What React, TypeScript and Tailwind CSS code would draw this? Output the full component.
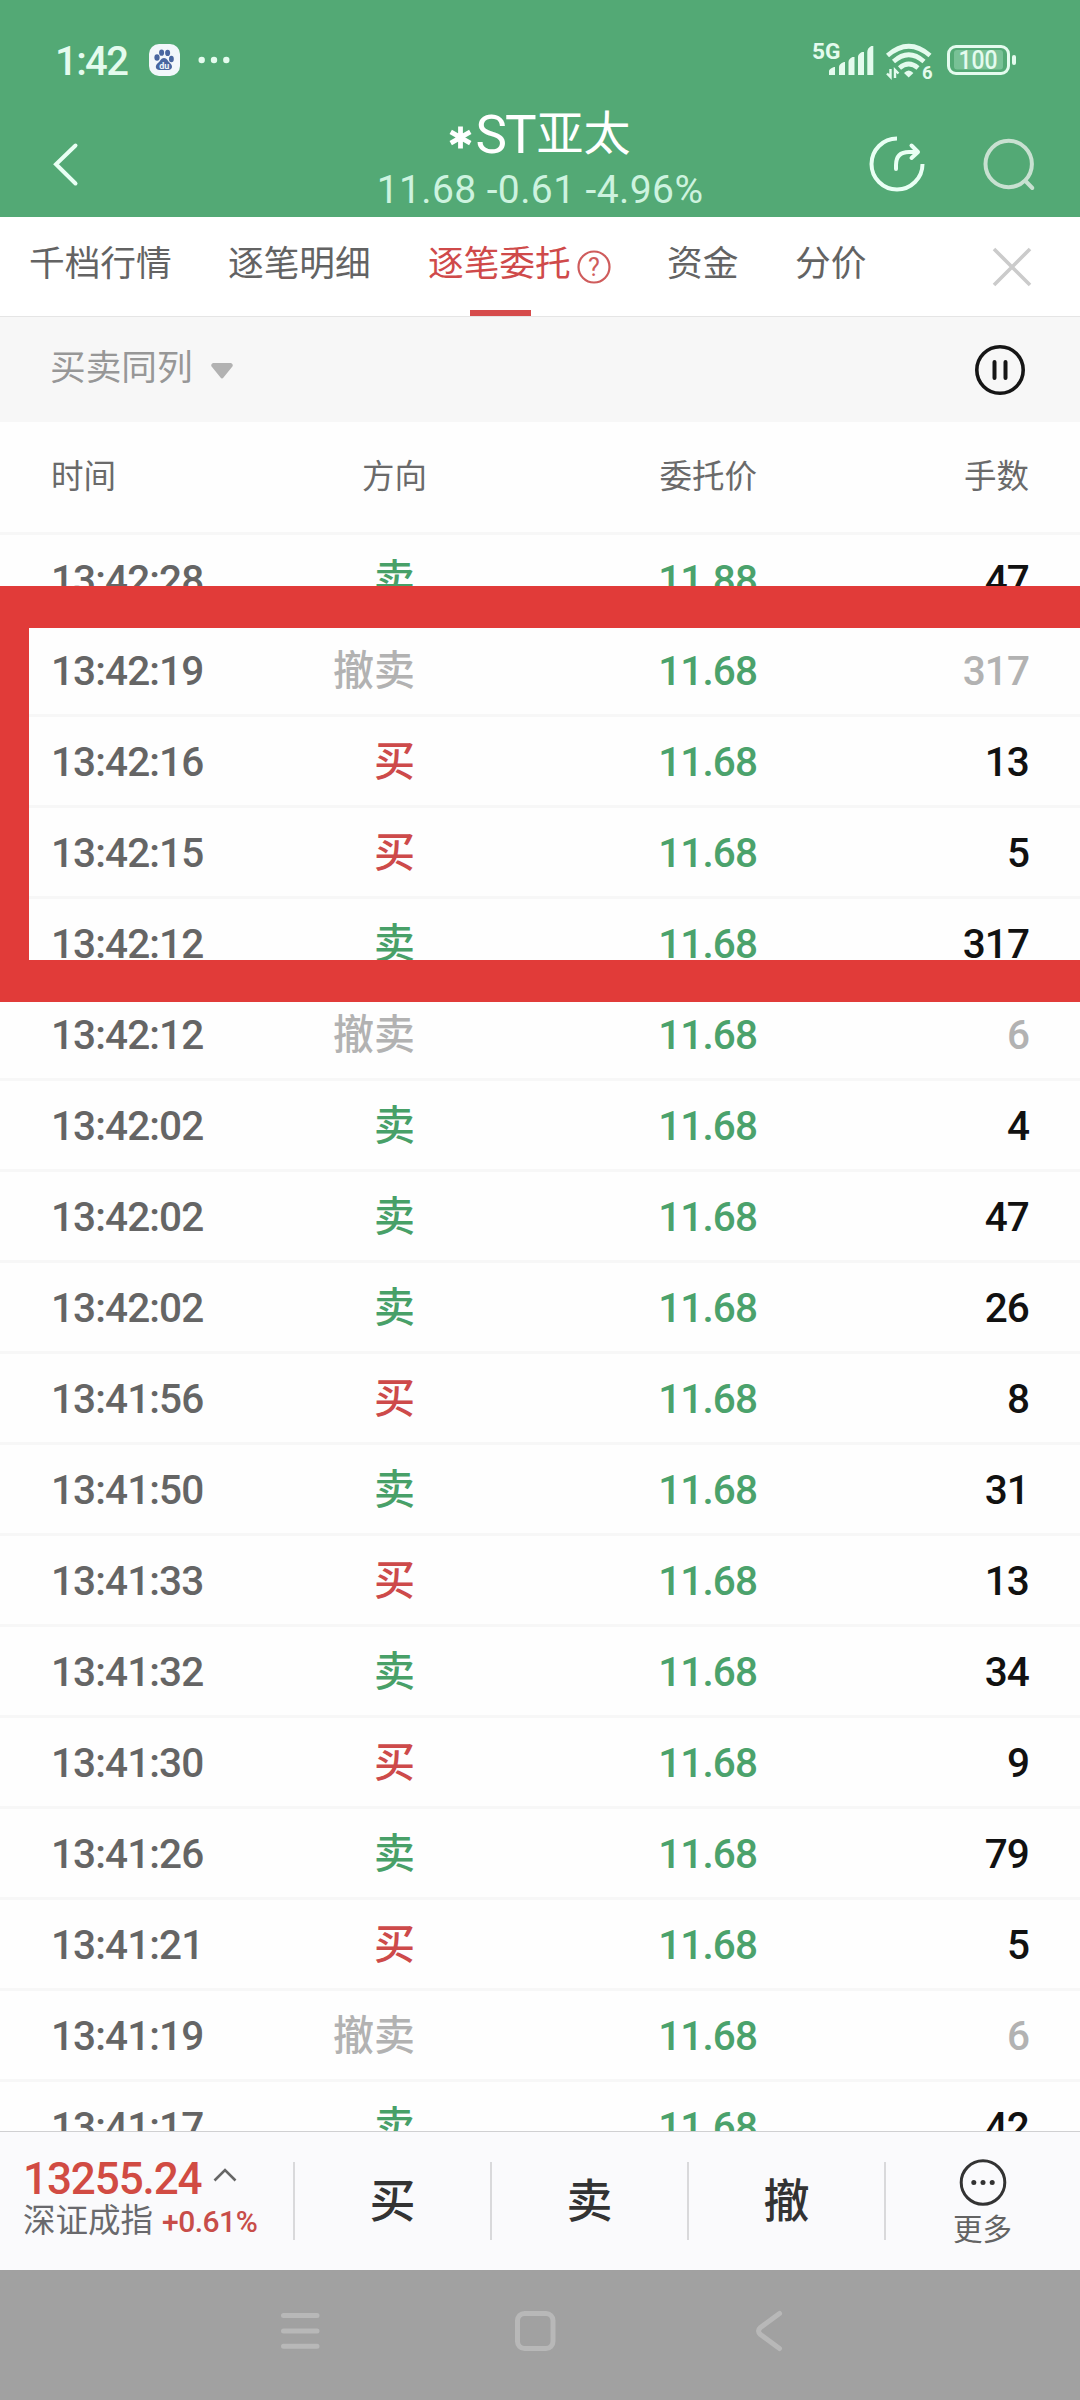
type Side = "buy" | "sell" | "cancel";

type Order = {
  time: string;
  side: Side;
  price: string;
  qty: number;
};

const orders: Order[] = [
  { time: "13:42:28", side: "sell", price: "11.88", qty: 47 },
  { time: "13:42:19", side: "cancel", price: "11.68", qty: 317 },
  { time: "13:42:16", side: "buy", price: "11.68", qty: 13 },
  { time: "13:42:15", side: "buy", price: "11.68", qty: 5 },
  { time: "13:42:12", side: "sell", price: "11.68", qty: 317 },
  { time: "13:42:12", side: "cancel", price: "11.68", qty: 6 },
  { time: "13:42:02", side: "sell", price: "11.68", qty: 4 },
  { time: "13:42:02", side: "sell", price: "11.68", qty: 47 },
  { time: "13:42:02", side: "sell", price: "11.68", qty: 26 },
  { time: "13:41:56", side: "buy", price: "11.68", qty: 8 },
  { time: "13:41:50", side: "sell", price: "11.68", qty: 31 },
  { time: "13:41:33", side: "buy", price: "11.68", qty: 13 },
  { time: "13:41:32", side: "sell", price: "11.68", qty: 34 },
  { time: "13:41:30", side: "buy", price: "11.68", qty: 9 },
  { time: "13:41:26", side: "sell", price: "11.68", qty: 79 },
  { time: "13:41:21", side: "buy", price: "11.68", qty: 5 },
  { time: "13:41:19", side: "cancel", price: "11.68", qty: 6 },
  { time: "13:41:17", side: "sell", price: "11.68", qty: 42 },
];

const sideLabel: Record<Side, string> = { buy: "买", sell: "卖", cancel: "撤卖" };

const sideColor: Record<Side, string> = {
  buy: "text-[#cd4a4a]",
  sell: "text-[#48a068]",
  cancel: "text-[#b2b2b2]",
};

function StatusBar() {
  return (
    <div className="flex h-[110px] items-start text-[#e4fbee]">
      <div className="mt-[41px] ml-[55px] w-[94px] text-[40px] leading-[41px] font-medium tracking-[-1.6px]">1:42</div>

      {/* NOTIFICATIONS */}
      <svg className="mt-[40px]" width="90" height="40" viewBox="149 40 90 40">
        <rect x="149" y="44" width="31" height="32" rx="10" fill="#f2f7fb" />
        <g fill="#4866a0">
          <ellipse cx="157" cy="57.5" rx="2.6" ry="3.3" />
          <ellipse cx="161.6" cy="52.7" rx="2.5" ry="3.1" />
          <ellipse cx="167.6" cy="52.9" rx="2.5" ry="3.1" />
          <ellipse cx="171.4" cy="59" rx="2.4" ry="3.2" />
          <path d="M164 58c3 0 3.6 3 6 5 3.5 3 2 7-1.5 7h-9c-4 0-5-4.5-1.5-7 2.5-2 3-5 6-5z" />
        </g>
        <text x="164.2" y="68.8" textAnchor="middle" fontSize="9" fontWeight="700" fill="#f2f7fb">du</text>
        <g fill="currentColor">
          <circle cx="201.7" cy="60" r="3.2" />
          <circle cx="214" cy="60" r="3.2" />
          <circle cx="226.3" cy="60" r="3.2" />
        </g>
      </svg>

      {/* SIGNAL, WIFI, BATTERY */}
      <svg className="mt-[38px] ml-[571px]" width="210" height="46" viewBox="810 38 210 46" fill="currentColor">
        <text x="812" y="58.5" fontSize="22" fontWeight="700" textLength="28.5" lengthAdjust="spacingAndGlyphs">5G</text>
        <path d="M829 75v-4q0-2 5-4h1v8zM839 75v-8q0-3 5-5h1v13zM848.5 75v-13q0-3 4-5h2v18zM858 75v-18q0-3 4-5h2v23zM867.3 75v-23q0-4 4-6h2v29z" />
        <g fill="none" stroke="currentColor" strokeWidth="4.6">
          <path d="M887.5 55.5Q908.7 37 930 55.5" />
          <path d="M893.5 61.5Q908.7 48 924 61.5" />
          <path d="M899.5 68Q908.7 60 918 68" />
        </g>
        <path d="M904 73q4.7-5 9.4 0l-4.7 4.5z" />
        <path d="M890.5 69v8l-3.5-3.5M895 78v-8l3.5 3.5" fill="none" stroke="currentColor" strokeWidth="2.4" />
        <text x="922" y="78.8" fontSize="18.5" fontWeight="700">6</text>
        <rect x="948.5" y="46.5" width="60" height="27" rx="7.5" fill="none" stroke="currentColor" strokeWidth="3" />
        <rect x="954" y="50" width="49" height="19.5" rx="3" fill="#78c196" />
        <text x="978" y="69" textAnchor="middle" fontSize="25" fontWeight="500" textLength="39" lengthAdjust="spacingAndGlyphs">100</text>
        <rect x="1012" y="55" width="4" height="10" rx="2" />
      </svg>
    </div>
  );
}

function TitleBar() {
  return (
    <div className="flex h-[107px] items-start">
      <svg className="mt-[29px] ml-[50px]" width="32" height="50" viewBox="50 139 32 50" fill="none" stroke="#e9fff4" strokeWidth="4" strokeLinecap="round">
        <path d="M75.5 145.5L56 164.3l19.5 19.2" />
      </svg>

      <div className="ml-[288px] flex w-[340px] flex-col items-center">
        <div className="flex h-[50px] items-center whitespace-nowrap text-white">
          <svg className="mt-[4px] mr-[3px]" width="23" height="25" viewBox="0 0 24 26" stroke="currentColor" strokeWidth="5">
            <path d="M12 1.5v23M1.8 7.2l20.4 11.6M1.8 18.8L22.2 7.2" />
          </svg>
          <span className="text-[53px] leading-[50px] tracking-[-2px]">ST</span>
          <span className="-mt-[2px] ml-[2px] text-[47px] leading-[50px]">亚太</span>
        </div>
        <div className="mt-[10px] text-[39px] leading-[40px] tracking-[0.4px] whitespace-nowrap text-[#cdf3df]">
          11.68 -0.61 -4.96%
        </div>
      </div>

      <svg className="mt-[24px] ml-[158px]" width="172" height="60" viewBox="868 134 172 60" fill="none" strokeWidth="4" strokeLinecap="round" strokeLinejoin="round">
        <g stroke="#e9fff4">
          <path d="M897 138.5a25.5 25.5 0 1 0 25.5 25.5" strokeLinecap="butt" />
          <path d="M896 169v-4q0-13 13-13h8M911.5 145.5l6.5 6.5-6.5 6" />
        </g>
        <g stroke="#c8e1d1">
          <circle cx="1008.7" cy="164" r="23.2" />
          <path d="M1026 181.5l6.3 6.5" />
        </g>
      </svg>
    </div>
  );
}

function Tabs() {
  return (
    <div className="flex h-[100px] items-start border-b border-[#e5e5e5] bg-white pl-[29px] text-[35.7px] leading-[95px] whitespace-nowrap text-[#636363]">
      <div className="w-[199px]">千档行情</div>
      <div className="w-[200px]">逐笔明细</div>
      <div className="relative flex w-[239px] items-center text-[#cf4a4a]">
        逐笔委托
        <svg className="mt-[4px] ml-[5px]" width="36" height="36" viewBox="0 0 36 36">
          <circle cx="18" cy="18" r="15.5" fill="none" stroke="#cf5c5c" strokeWidth="2.2" />
          <text x="18" y="27" textAnchor="middle" fontSize="25" fill="#cf5c5c">?</text>
        </svg>
        <span className="absolute top-[93px] left-[42px] h-[6px] w-[61px] bg-[#d64c4c]" />
      </div>
      <div className="w-[128px]">资金</div>
      <div className="w-[197px]">分价</div>
      <svg className="mt-[30px]" width="40" height="40" viewBox="0 0 40 40" stroke="#cbcbcb" strokeWidth="3.6">
        <path d="M2 2l36 36M38 2L2 38" />
      </svg>
    </div>
  );
}

function FilterBar() {
  return (
    <div className="flex h-[105px] items-center bg-[#f7f7f7] pl-[50px] text-[35.7px] text-[#979797]">
      <span className="-mt-[3px] leading-[50px]">买卖同列</span>
      <svg className="mt-[2px] ml-[18px]" width="22" height="16" viewBox="0 0 22 16" fill="#b2b2b2">
        <path d="M2 0h18q3 1.5 1 4L12.5 14.5q-1.5 2-3 0L1 4q-2-2.5 1-4z" />
      </svg>
      <svg className="mr-[55px] ml-auto" width="50" height="50" viewBox="0 0 50 50" fill="none" stroke="#161616">
        <circle cx="25" cy="25" r="23.2" strokeWidth="3.6" />
        <path d="M19.5 17v16M30.5 17v16" strokeWidth="4" strokeLinecap="round" />
      </svg>
    </div>
  );
}

function OrderTable() {
  return (
    <div className="relative h-[1709px] overflow-hidden bg-[#fefefe]">
      <div className="flex h-[113px] items-center border-b-3 border-[#f7f7f7] pt-[1px] pr-[51px] pl-[51px] text-[32.5px] whitespace-nowrap text-[#6a6a6a]">
        <span className="w-[180px]">时间</span>
        <span className="w-[196px] text-right">方向</span>
        <span className="w-[330px] text-right">委托价</span>
        <span className="flex-1 text-right">手数</span>
      </div>

      {orders.map((o, i) => (
        <div
          key={i}
          className="flex h-[91px] items-center border-b-3 border-[#f7f7f7] pt-[2px] pr-[51px] pl-[51px] text-[40.5px] leading-[60px] font-medium tracking-[-0.9px]"
        >
          <span className="w-[180px] text-[#656565]">{o.time}</span>
          <span className={`w-[184px] text-right text-[41px] tracking-normal ${sideColor[o.side]}`}>{sideLabel[o.side]}</span>
          <span className="w-[342px] text-right text-[#4ba26c]">{o.price}</span>
          <span className={`flex-1 text-right ${o.side === "cancel" ? "text-[#b2b2b2]" : "text-[#111]"}`}>{o.qty}</span>
        </div>
      ))}

      {/* MARKED ORDERS */}
      <div className="absolute top-[164px] left-0 h-[416px] w-full border-y-[42px] border-l-[29px] border-[#e13b39]" />
    </div>
  );
}

function BottomBar() {
  return (
    <div className="flex h-[139px] items-start border-t border-[#d0d0d2] bg-[#fafafc] text-[#333]">
      <div className="w-[293px] pl-[23px] whitespace-nowrap">
        <div className="mt-[25px] flex h-[44px] items-center text-[44px] leading-[46px] font-medium tracking-[-1.1px] text-[#d14b43]">
          13255.24
          <svg className="mb-[8px] ml-[12px]" width="24" height="14" viewBox="0 0 24 14" fill="none" stroke="#666" strokeWidth="2.6">
            <path d="M1.5 12.5L12 2l10.5 10.5" />
          </svg>
        </div>
        <div className="flex h-[40px] items-center text-[32.5px] leading-[40px] text-[#69696d]">
          深证成指
          <span className="mt-[2px] ml-[9px] text-[30px] font-medium tracking-[-0.5px] text-[#c84d49]">+0.61%</span>
        </div>
      </div>
      {["买", "卖", "撤"].map((label) => (
        <div key={label} className="flex w-[197px] items-start">
          <div className="mt-[30px] h-[78px] w-[2px] bg-[#d9d9db]" />
          <div className="mt-[37px] flex-1 text-center text-[46px] leading-[64px] font-medium">{label}</div>
        </div>
      ))}
      <div className="mt-[30px] h-[78px] w-[2px] bg-[#d9d9db]" />
      <div className="flex w-[193px] flex-col items-center pt-[26px] text-[29.5px] text-[#636363]">
        <svg width="48" height="48" viewBox="0 0 48 48">
          <circle cx="24" cy="24.5" r="21.8" fill="none" stroke="#333" strokeWidth="3" />
          <g fill="#333">
            <circle cx="14.8" cy="24.5" r="2.5" />
            <circle cx="24" cy="24.5" r="2.5" />
            <circle cx="33.2" cy="24.5" r="2.5" />
          </g>
        </svg>
        <span className="mt-[4px] leading-[40px]">更多</span>
      </div>
    </div>
  );
}

function NavBar() {
  return (
    <div className="h-[130px] bg-[#a1a1a1]">
      <svg width="1080" height="130" viewBox="0 2270 1080 130" fill="none" stroke="#b8b8b8" strokeWidth="5" strokeLinecap="round" strokeLinejoin="round">
        <path d="M283.5 2315.5h33.5M283.5 2331h33.5M283.5 2346.3h33.5" />
        <rect x="517.5" y="2313.5" width="35.5" height="35" rx="7" />
        <path d="M779.5 2313.5l-19 14q-4 3.5 0 7l19 14" />
      </svg>
    </div>
  );
}

export default function App() {
  return (
    <div className="flex h-[2400px] w-[1080px] flex-col overflow-hidden bg-white font-[Roboto,'Noto_Sans_CJK_SC',sans-serif]">
      <div className="bg-[#53a975]">
        <StatusBar />
        <TitleBar />
      </div>
      <Tabs />
      <FilterBar />
      <OrderTable />
      <BottomBar />
      <NavBar />
    </div>
  );
}
